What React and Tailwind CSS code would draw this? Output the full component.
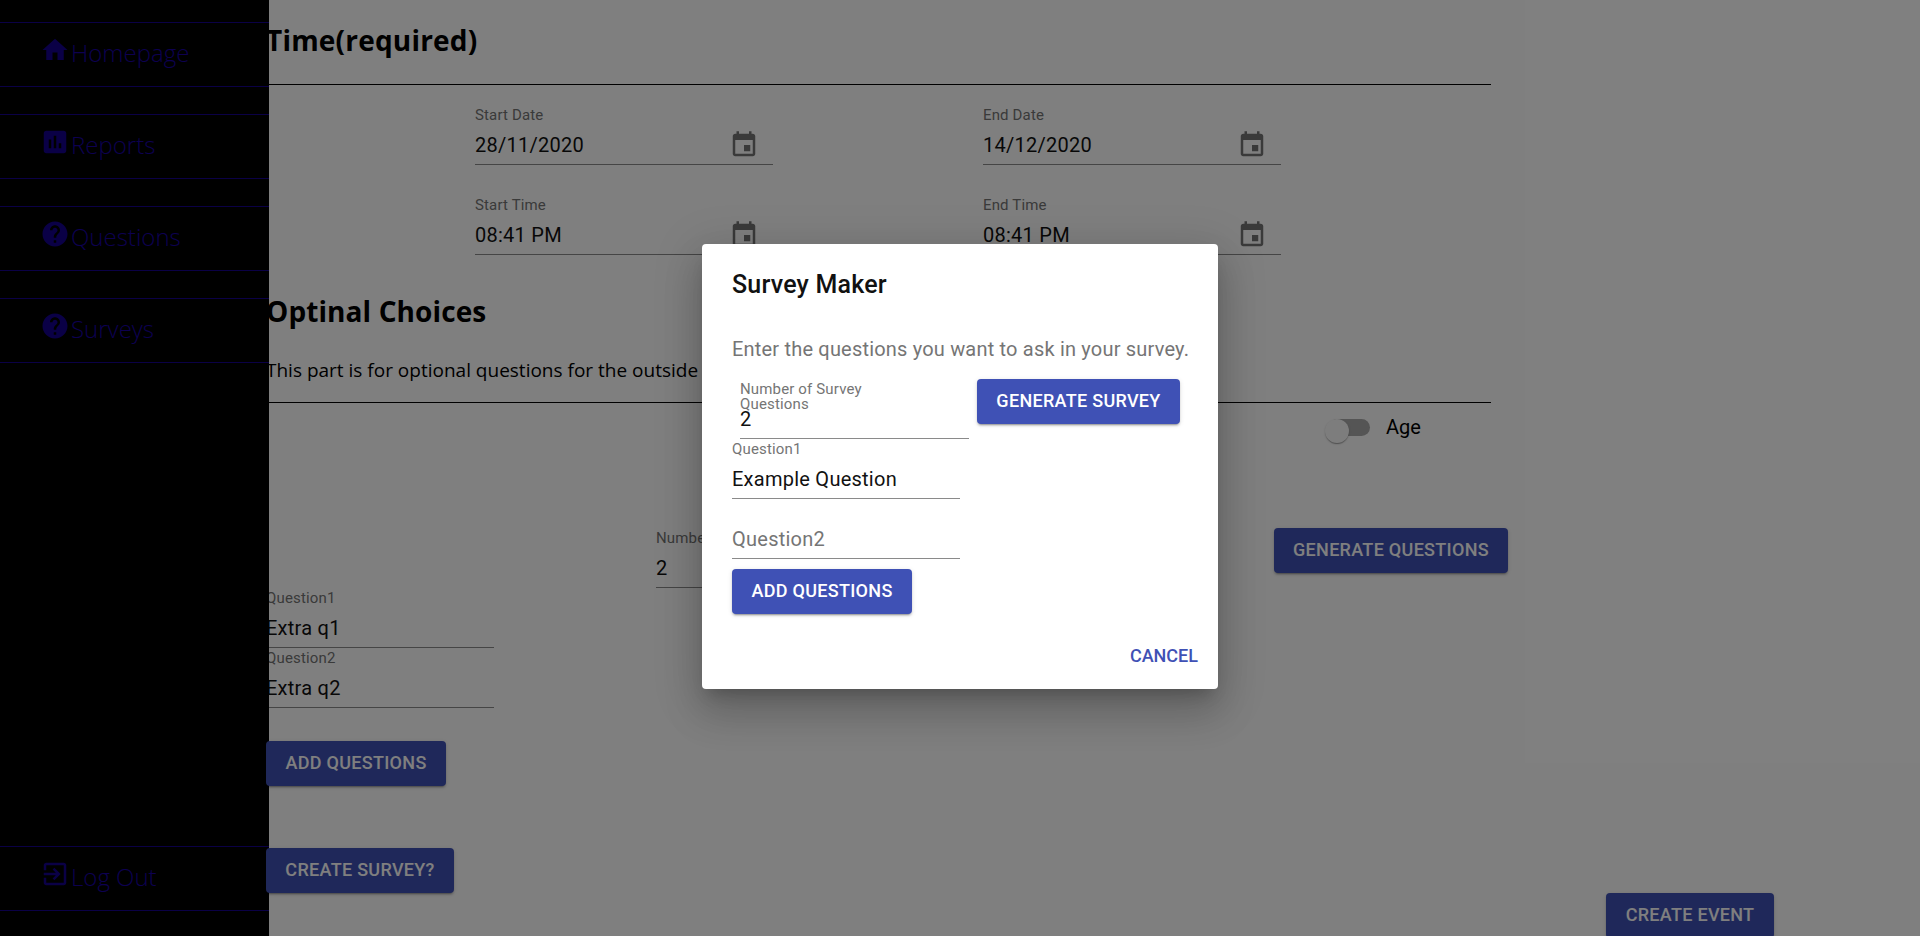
const EVENT = "M17 12h-5v5h5v-5zM16 1v2H8V1H6v2H5c-1.11 0-1.99.9-1.99 2L3 19c0 1.1.89 2 2 2h14c1.1 0 2-.9 2-2V5c0-1.1-.9-2-2-2h-1V1h-2zm3 18H5V8h14v11z";
const HOME = "M10 20v-6h4v6h5v-8h3L12 3 2 12h3v8z";
const REPORT = "M19 3H5c-1.1 0-2 .9-2 2v14c0 1.1.9 2 2 2h14c1.1 0 2-.9 2-2V5c0-1.1-.9-2-2-2zM9 17H7v-7h2v7zm4 0h-2V7h2v10zm4 0h-2v-4h2v4z";
const HELP = "M12 2C6.48 2 2 6.48 2 12s4.48 10 10 10 10-4.48 10-10S17.52 2 12 2zm1 17h-2v-2h2v2zm2.07-7.75l-.9.92C13.45 12.9 13 13.5 13 15h-2v-.5c0-1.1.45-2.1 1.17-2.83l1.24-1.26c.37-.36.59-.86.59-1.41 0-1.1-.9-2-2-2s-2 .9-2 2H8c0-2.21 1.79-4 4-4s4 1.79 4 4c0 .88-.36 1.68-.93 2.25z";
const EXIT = "M10.09 15.59L11.5 17l5-5-5-5-1.41 1.41L12.67 11H3v2h9.67l-2.58 2.59zM19 3H5c-1.11 0-2 .89-2 2v4h2V5h14v14H5v-4H3v4c0 1.1.89 2 2 2h14c1.1 0 2-.9 2-2V5c0-1.1-.9-2-2-2z";

function Icon({ d, className }) {
  return (
    <svg viewBox="0 0 24 24" fill="currentColor" className={className}>
      <path d={d} />
    </svg>
  );
}

function NavRow({ icon, label }) {
  return (
    <div className="flex h-[65px] items-center border-y border-[#14008c] pl-10 text-[#14008c]">
      <Icon d={icon} className="mb-[10px] h-[30px] w-[30px] shrink-0" />
      <span className="mb-1 ml-[1px] font-['Open_Sans',sans-serif] text-2xl font-light leading-none text-[#1a00a0]">{label}</span>
    </div>
  );
}

function Btn({ children, className = "" }) {
  return (
    <button className={"relative z-20 h-[45px] rounded bg-[#3f51b5] pb-px text-lg font-medium uppercase tracking-[0.3px] text-white shadow-[0_3px_1px_-2px_rgba(0,0,0,0.2),0_2px_2px_0_rgba(0,0,0,0.14),0_1px_5px_0_rgba(0,0,0,0.12)] " + className}>
      {children}
    </button>
  );
}

function Field({ label, value, placeholder, className = "", icon }) {
  return (
    <div className={"h-[58px] border-b border-[#8a8a8a] " + className}>
      <div className="h-4 text-[15px] leading-4 tracking-[0.15px] text-[#757575]">{label}</div>
      <div className="mt-[10px] flex h-6 items-center justify-between text-xl leading-6 tracking-[0.25px] text-[#111]">
        {value}
        {placeholder && <span className="text-[#757575]">{placeholder}</span>}
        {icon && <Icon d={EVENT} className="mr-[14px] h-[30px] w-[30px] text-[#757575]" />}
      </div>
    </div>
  );
}

function Sidebar() {
  return (
    <aside className="relative z-10 flex h-[936px] w-[269px] shrink-0 flex-col bg-black pt-[22px] pb-[25px]">
      <div className="flex flex-col gap-[27px]">
        <NavRow icon={HOME} label="Homepage" />
        <NavRow icon={REPORT} label="Reports" />
        <NavRow icon={HELP} label="Questions" />
        <NavRow icon={HELP} label="Surveys" />
      </div>
      <div className="mt-auto">
        <NavRow icon={EXIT} label="Log Out" />
      </div>
    </aside>
  );
}

function Toggle() {
  return (
    <div className="ml-[1063px] mt-[5px] flex h-[38px] items-center">
      <div className="relative h-[17px] w-[41px] rounded-full bg-[#aaaaaa]">
        <div className="absolute -left-[4px] top-0 h-6 w-6 rounded-full bg-[#fafafa] shadow-[0_2px_1px_-1px_rgba(0,0,0,0.2),0_1px_1px_0_rgba(0,0,0,0.14),0_1px_3px_0_rgba(0,0,0,0.12)]" />
      </div>
      <span className="ml-[16px] text-xl text-black">Age</span>
    </div>
  );
}

function Main() {
  return (
    <main className="-ml-[3px] w-[1654px] shrink-0 text-black">
      <div className="flex h-[85px] w-[1225px] items-start border-b border-black pt-[20px]">
        <h2 className="font-['Open_Sans',sans-serif] text-[28px] font-bold leading-10 tracking-[0.2px]">Time(required)</h2>
      </div>
      <div className="grid grid-cols-[298px_298px] gap-x-[210px] gap-y-8 pl-[209px] pt-[22px]">
        <Field label="Start Date" value="28/11/2020" icon />
        <Field label="End Date" value="14/12/2020" icon />
        <Field label="Start Time" value="08:41 PM" icon />
        <Field label="End Time" value="08:41 PM" icon />
      </div>
      <h2 className="mt-9 font-['Open_Sans',sans-serif] text-[28px] font-bold leading-10 tracking-[0.1px]">Optinal Choices</h2>
      <p className="mt-[27px] font-['Open_Sans',sans-serif] text-[19px] leading-6">This part is for optional questions for the outside</p>
      <div className="mt-5 h-px w-[1225px] bg-black" />
      <Toggle />
      <div className="mt-[82px] flex items-start pl-[390px]">
        <Field label="Number of Questions" value="2" className="mt-[2px] w-[228px]" />
        <Btn className="ml-[390px] w-[234px]">Generate Questions</Btn>
      </div>
      <div className="mt-[2px] flex flex-col gap-[2px]">
        <Field label="Question1" value="Extra q1" className="w-[228px]" />
        <Field label="Question2" value="Extra q2" className="w-[228px]" />
      </div>
      <Btn className="mt-[33px] block w-[180px]">Add Questions</Btn>
      <div className="mt-[62px] flex items-start">
        <Btn className="w-[188px]">Create Survey?</Btn>
        <Btn className="ml-[1152px] mt-[45px] w-[168px]">Create Event</Btn>
      </div>
    </main>
  );
}

function Dialog() {
  return (
    <div className="absolute inset-0 z-30 flex items-center justify-center bg-black/50 pb-[3px]">
      <div className="h-[445px] w-[516px] rounded bg-white pl-[30px] pr-[20px] pt-[25px] shadow-[0_11px_15px_-7px_rgba(0,0,0,0.2),0_24px_38px_3px_rgba(0,0,0,0.14),0_9px_46px_8px_rgba(0,0,0,0.12)]">
        <h3 className="text-[25px] font-medium leading-8 tracking-[0.2px] text-[#111]">Survey Maker</h3>
        <p className="mt-[35px] whitespace-nowrap text-xl leading-[27px] tracking-[0.19px] text-[#757575]">Enter the questions you want to ask in your survey.</p>
        <div className="mt-4 flex items-start">
          <div className="ml-2 mt-[3px] h-[57px] w-[229px] border-b border-[#8a8a8a]">
            <div className="w-[150px] text-[15px] leading-[15px] tracking-[0.15px] text-[#757575]">Number of Survey Questions</div>
            <div className="-mt-[5px] text-xl leading-6 text-[#111]">2</div>
          </div>
          <Btn className="ml-2 w-[203px]">Generate Survey</Btn>
        </div>
        <div className="mt-[2px] flex flex-col gap-[2px]">
          <Field label="Question1" value="Example Question" className="w-[228px]" />
          <Field placeholder="Question2" className="w-[228px]" />
        </div>
        <Btn className="mt-[10px] block w-[180px]">Add Questions</Btn>
        <div className="mt-[30px] flex justify-end text-lg font-medium leading-6 text-[#3f51b5]">CANCEL</div>
      </div>
    </div>
  );
}

export default function App() {
  return (
    <div className="relative flex h-[936px] w-[1920px] overflow-hidden bg-white font-['Roboto',sans-serif]">
      <Sidebar />
      <Main />
      <Dialog />
    </div>
  );
}
